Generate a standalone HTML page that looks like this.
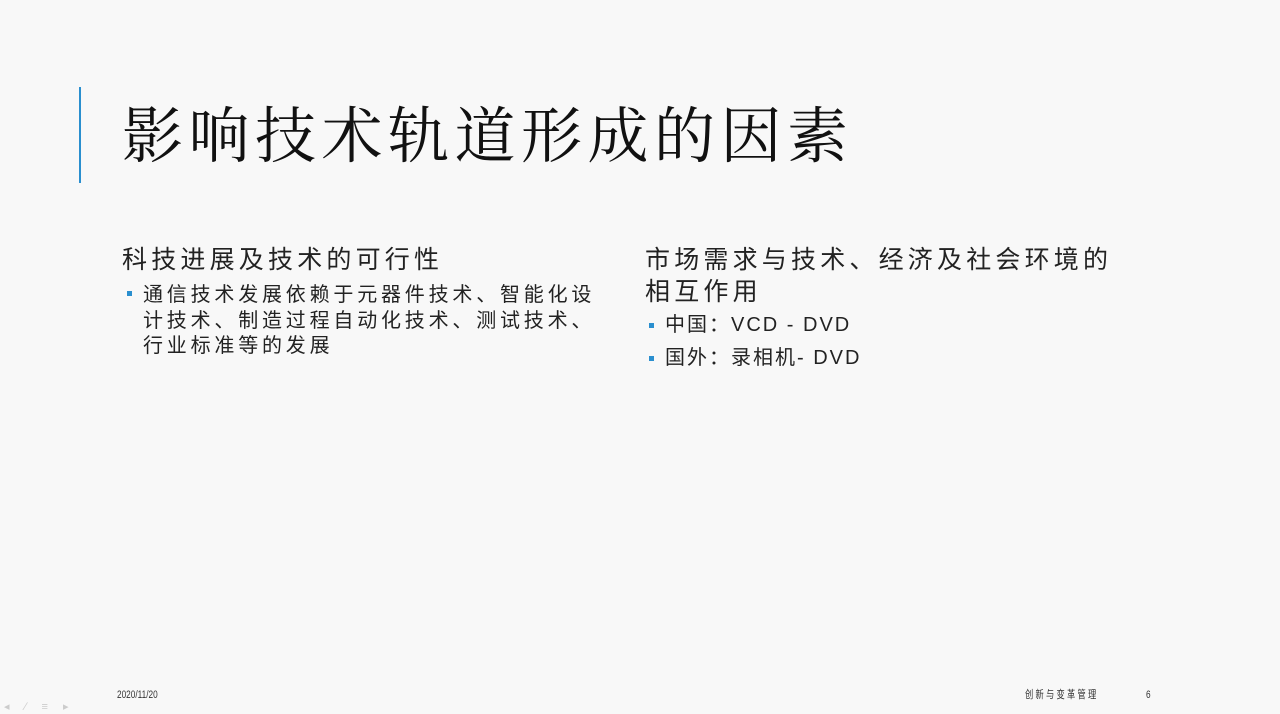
<!DOCTYPE html>
<html><head><meta charset="utf-8"><style>
body{margin:0;width:1280px;height:714px;background:#f8f8f8;position:relative;overflow:hidden;font-family:"Liberation Sans","Noto Sans CJK SC",sans-serif;color:#222}
.bar{position:absolute;left:79px;top:87px;width:2px;height:96px;background:#2a8fcf}
.title{position:absolute;left:122px;top:98px;font-family:"Liberation Serif","Noto Serif CJK SC",serif;font-size:61px;line-height:80px;letter-spacing:5.5px;white-space:nowrap;color:#111}
.h{position:absolute;font-size:25px;line-height:32px;letter-spacing:4.2px;color:#222;white-space:nowrap}
.b{position:absolute;font-size:20px;line-height:25.5px;letter-spacing:3.8px;color:#222;white-space:nowrap}
.sq{position:absolute;width:5px;height:5px;background:#2a8fcf}
.f{position:absolute;top:689px;font-size:11px;color:#333;transform:scaleX(0.75);transform-origin:left}
</style></head><body>
<div class="bar"></div>
<div class="title">影响技术轨道形成的因素</div>
<div class="h" style="left:122px;top:244px">科技进展及技术的可行性</div>
<div class="sq" style="left:127px;top:291px"></div>
<div class="b" style="left:143px;top:283px">通信技术发展依赖于元器件技术、智能化设<br>计技术、制造过程自动化技术、测试技术、<br>行业标准等的发展</div>
<div class="h" style="left:645px;top:244px">市场需求与技术、经济及社会环境的<br>相互作用</div>
<div class="sq" style="left:649px;top:323px"></div>
<div class="b" style="left:665px;top:313px;letter-spacing:2px">中国：VCD - DVD</div>
<div class="sq" style="left:649px;top:356px"></div>
<div class="b" style="left:665px;top:346px;letter-spacing:2px">国外：录相机- DVD</div>
<div class="f" style="left:117px">2020/11/20</div>
<div class="f" style="left:1025px;top:686px;letter-spacing:3px">创新与变革管理</div>
<div class="f" style="left:1146px">6</div>
<div style="position:absolute;left:4px;top:700px;font-size:11px;color:#ccc;letter-spacing:6px">◂ ∕ ≡ ▸</div>
</body></html>
